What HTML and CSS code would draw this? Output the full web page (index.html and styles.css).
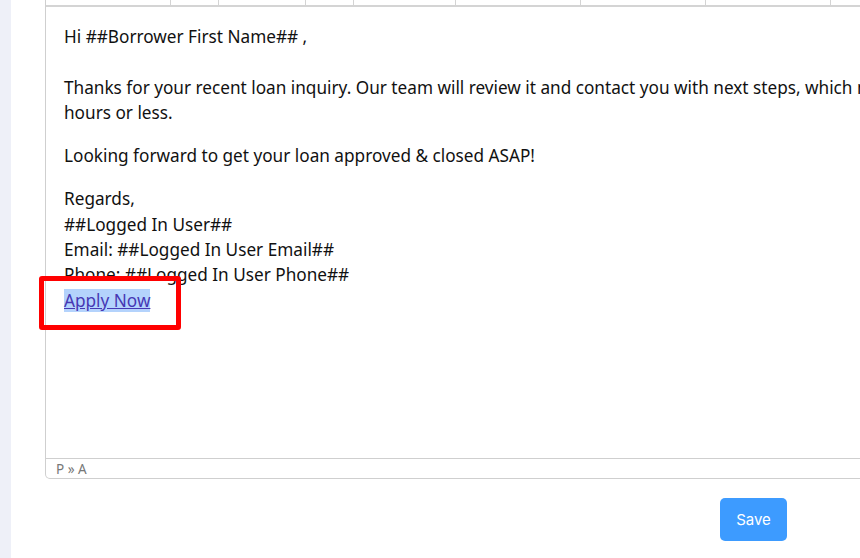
FILE: index.html
```html
<!DOCTYPE html>
<html lang="en">
<head>
    <meta charset="UTF-8">
    <title>Email Template</title>
    <link rel="stylesheet" href="styles.css">
</head>
<body>

<div class="side"></div>

<div class="main">
    <div class="panel">
        <div class="editor">
            <div class="toolbar">
                <span class="tb-cell" style="width:125px"></span>
                <span class="tb-cell" style="width:48px"></span>
                <span class="tb-cell" style="width:87px"></span>
                <span class="tb-cell" style="width:48px"></span>
                <span class="tb-cell" style="width:102px"></span>
                <span class="tb-cell" style="width:125px"></span>
                <span class="tb-cell" style="width:125px"></span>
                <span class="tb-cell" style="width:125px"></span>
                <span class="tb-cell" style="width:125px"></span>
            </div>

            <div class="content">
                <p>Hi ##Borrower First Name## ,<br><br>Thanks for your recent loan inquiry. Our team will review it and contact you with next steps, which may take 24 hours or less.</p>
                <p>Looking forward to get your loan approved &amp; closed ASAP!</p>
                <p>Regards,<br>##Logged In User##<br>Email: ##Logged In User Email##<br>Phone: ##Logged In User Phone##<br><span class="mark-wrap"><a href="#" class="link selected">Apply Now</a><span class="highlight-box"></span></span></p>
            </div>

            <div class="statusbar">P » A</div>
        </div>

        <div class="actions">
            <button class="btn-save">Save</button>
        </div>
    </div>
</div>

</body>
</html>
```

FILE: styles.css
```css
html, body { margin: 0; height: 100%; }
body {
    display: flex;
    background-color: #fff;
    overflow: hidden;
    font-family: "Noto Sans", "Open Sans", sans-serif;
}

.side { width: 11px; flex: none; background-color: #eef0f8; }

.main { flex: 1; padding-left: 34px; }
.panel { width: 742px; }

.editor {
    width: 1000px;
    border: 1px solid #cfcfcf;
    border-top: none;
    border-radius: 0 0 0 5px;
}

.toolbar {
    display: flex;
    height: 5px;
    border-bottom: 2px solid #d4d4d4;
}
.tb-cell { flex: none; height: 5px; border-right: 1px solid #d4d4d4; box-sizing: border-box; }

.content {
    height: 451px;
    padding: 17px 18px 0 18px;
    box-sizing: border-box;
    color: #111;
    font-size: 17.2px;
    line-height: 25.3px;
}
.content p { margin: 0 0 18px 0; width: 920px; }

.mark-wrap { position: relative; }
.link { color: #4638b4; text-decoration: underline; }
.selected { background-color: #b4d3fc; }
.highlight-box {
    position: absolute;
    left: -25px;
    top: -13px;
    width: 132px;
    height: 44px;
    border: 5px solid #ff0000;
    border-radius: 3px;
}

.statusbar {
    height: 19px;
    border-top: 1px solid #cfcfcf;
    padding-left: 10px;
    font-size: 13.5px;
    line-height: 20px;
    color: #777;
}

.actions { display: flex; justify-content: flex-end; margin-top: 19px; }
.btn-save {
    width: 67px;
    height: 43px;
    background-color: #3d9bff;
    color: #fff;
    border: none;
    border-radius: 5px;
    font-family: "Inter", "Lato", sans-serif;
    font-size: 15px;
    cursor: pointer;
}
```
